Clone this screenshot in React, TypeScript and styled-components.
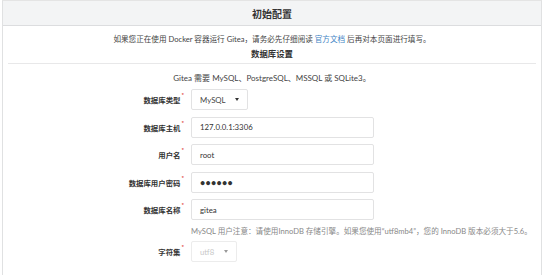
import React from "react";
import styled, { createGlobalStyle } from "styled-components";

const Global = createGlobalStyle`
  html, body { margin: 0; padding: 0; background: #ffffff; }
  body {
    font-family: Lato, "Noto Sans CJK SC", "Noto Sans", sans-serif;
    color: rgba(0,0,0,0.87);
    width: 544px;
    height: 275px;
    overflow: hidden;
  }
`;

const Page = styled.div`
  padding: 0 2px 0 2px;
  height: 275px;
  box-sizing: border-box;
`;

const Segment = styled.div`
  border: 1px solid #e0e1e2;
  border-top: 1px solid #e4e4e4;
  border-bottom: none;
  height: 275px;
  box-sizing: border-box;
  background: #fff;
`;

const Header = styled.h3`
  margin: 0;
  height: 24px;
  background: #f3f4f5;
  border-bottom: 1px solid #dcdddf;
  display: flex;
  align-items: center;
  justify-content: center;
  font-size: 10px;
  font-weight: 700;
  color: #333;
`;

const Body = styled.div`
  padding: 7px 0 0 0;
  display: flex;
  flex-direction: column;
`;

const Intro = styled.p`
  margin: 0;
  text-align: center;
  font-size: 7.6px;
  line-height: 12px;
  color: #444;
`;

const Link = styled.a`
  color: #4183c4;
  text-decoration: none;
`;

const SectionTitle = styled.h4`
  margin: 4px 5px 0 5px;
  padding-bottom: 3px;
  border-bottom: 1px solid #e8e8e9;
  text-align: center;
  font-size: 8.4px;
  line-height: 11px;
  font-weight: 700;
  color: #333;
`;

const Requirement = styled.p`
  margin: 9px 0 0 0;
  text-align: center;
  font-size: 8px;
  line-height: 11px;
  color: #444;
`;

const Form = styled.div`
  margin-top: 5px;
  display: flex;
  flex-direction: column;
  gap: 6.5px;
`;

const Row = styled.div`
  display: grid;
  grid-template-columns: 181px auto;
  column-gap: 7px;
  align-items: center;
`;

const Label = styled.label`
  justify-self: end;
  font-size: 7.4px;
  font-weight: 700;
  color: #333;
  display: flex;
  align-items: flex-start;
  gap: 1px;
`;

const Star = styled.span`
  color: #db2828;
  font-size: 6px;
  line-height: 6px;
  margin-top: -2px;
`;

const Input = styled.div<{ $dots?: boolean }>`
  width: 183px;
  height: 21px;
  box-sizing: border-box;
  border: 1px solid #e2e2e3;
  border-radius: 2px;
  padding-left: 8px;
  display: flex;
  align-items: center;
  font-size: ${(p) => (p.$dots ? "9px" : "7.8px")};
  font-weight: ${(p) => (p.$dots ? 700 : 400)};
  letter-spacing: ${(p) => (p.$dots ? "0.3px" : "0")};
  color: #333;
`;

const Select = styled.div<{ $width: number; $disabled?: boolean }>`
  width: ${(p) => p.$width}px;
  height: 21px;
  box-sizing: border-box;
  border: 1px solid ${(p) => (p.$disabled ? "#ececec" : "#e2e2e3")};
  border-radius: 2px;
  padding: 0 8px 0 8px;
  display: flex;
  align-items: center;
  justify-content: space-between;
  font-size: 7.8px;
  color: ${(p) => (p.$disabled ? "#c8c8c8" : "#444")};
`;

const Caret = styled.span<{ $disabled?: boolean }>`
  width: 0;
  height: 0;
  border-left: 2.5px solid transparent;
  border-right: 2.5px solid transparent;
  border-top: 3px solid ${(p) => (p.$disabled ? "#999" : "#333")};
`;

const Help = styled.p`
  margin: -1px 0 -2px 188px;
  font-size: 7.6px;
  line-height: 11px;
  color: #888;
  white-space: nowrap;
`;

const Field: React.FC<{ label: string; children: React.ReactNode }> = ({ label, children }) => (
  <Row>
    <Label>
      {label}
      <Star>*</Star>
    </Label>
    {children}
  </Row>
);

export default function App() {
  return (
    <>
      <Global />
      <Page>
        <Segment>
          <Header>初始配置</Header>
          <Body>
            <Intro>
              如果您正在使用 Docker 容器运行 Gitea，请务必先仔细阅读 <Link>官方文档</Link> 后再对本页面进行填写。
            </Intro>
            <SectionTitle>数据库设置</SectionTitle>
            <Requirement>Gitea 需要 MySQL、PostgreSQL、MSSQL 或 SQLite3。</Requirement>
            <Form>
              <Field label="数据库类型">
                <Select $width={57}>
                  MySQL
                  <Caret />
                </Select>
              </Field>
              <Field label="数据库主机">
                <Input>127.0.0.1:3306</Input>
              </Field>
              <Field label="用户名">
                <Input>root</Input>
              </Field>
              <Field label="数据库用户密码">
                <Input $dots>••••••</Input>
              </Field>
              <Field label="数据库名称">
                <Input>gitea</Input>
              </Field>
              <Help>
                MySQL 用户注意：请使用InnoDB 存储引擎。如果您使用“utf8mb4”，您的 InnoDB 版本必须大于5.6。
              </Help>
              <Field label="字符集">
                <Select $width={46} $disabled>
                  utf8
                  <Caret $disabled />
                </Select>
              </Field>
            </Form>
          </Body>
        </Segment>
      </Page>
    </>
  );
}
